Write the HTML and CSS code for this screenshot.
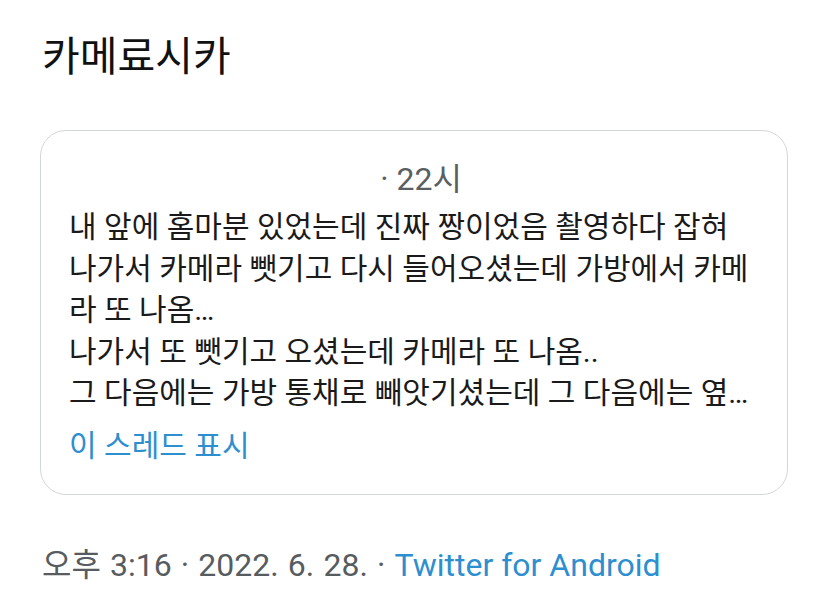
FILE: index.html
```html
<!DOCTYPE html>
<html lang="ko">
<head>
<meta charset="utf-8">
<link rel="stylesheet" href="styles.css">
</head>
<body>
<div class="page">
  <h1 class="title">카메료시카</h1>
  <div class="card">
    <div class="meta">· 22시</div>
    <div class="body">
      <p>내 앞에 홈마분 있었는데 진짜 짱이었음 촬영하다 잡혀<br>나가서 카메라 뺏기고 다시 들어오셨는데 가방에서 카메<br>라 또 나옴…<br>나가서 또 뺏기고 오셨는데 카메라 또 나옴..<br>그 다음에는 가방 통채로 빼앗기셨는데 그 다음에는 옆…</p>
    </div>
    <div class="thread">이 스레드 표시</div>
  </div>
  <div class="footer"><span class="stamp">오후 3:16 · 2022. 6. 28. · </span><span class="link">Twitter for Android</span></div>
</div>
</body>
</html>
```

FILE: styles.css
```css
html, body {
  margin: 0;
  padding: 0;
  background: #ffffff;
}
body {
  font-family: Roboto, "Noto Sans CJK KR", sans-serif;
  color: #141414;
}
.page {
  padding: 29px 40px 0 40px;
  width: 748px;
}
.title {
  margin: 0 0 0 2px;
  font-size: 41px;
  font-weight: 400;
  line-height: 56px;
  color: #111111;
}
.card {
  margin-top: 45px;
  border: 1px solid #d4d7da;
  border-radius: 26px;
  height: 365px;
  box-sizing: border-box;
  padding: 28px 28px 0 28px;
}
.meta {
  text-align: center;
  color: #5a5f63;
  font-size: 32px;
  line-height: 40px;
  margin-bottom: 7px;
  padding-left: 14px;
}
.body p {
  margin: 0;
  font-size: 30px;
  line-height: 41.6px;
  color: #1a1a1a;
  white-space: nowrap;
}
.thread {
  margin-top: 12px;
  font-size: 30px;
  line-height: 40px;
  color: #2d8fcf;
}
.footer {
  margin-top: 50px;
  margin-left: 2px;
  font-size: 32px;
  line-height: 40px;
  color: #575c60;
}
.stamp {
  word-spacing: 1.2px;
}
.link {
  color: #2d8fcf;
}
```
